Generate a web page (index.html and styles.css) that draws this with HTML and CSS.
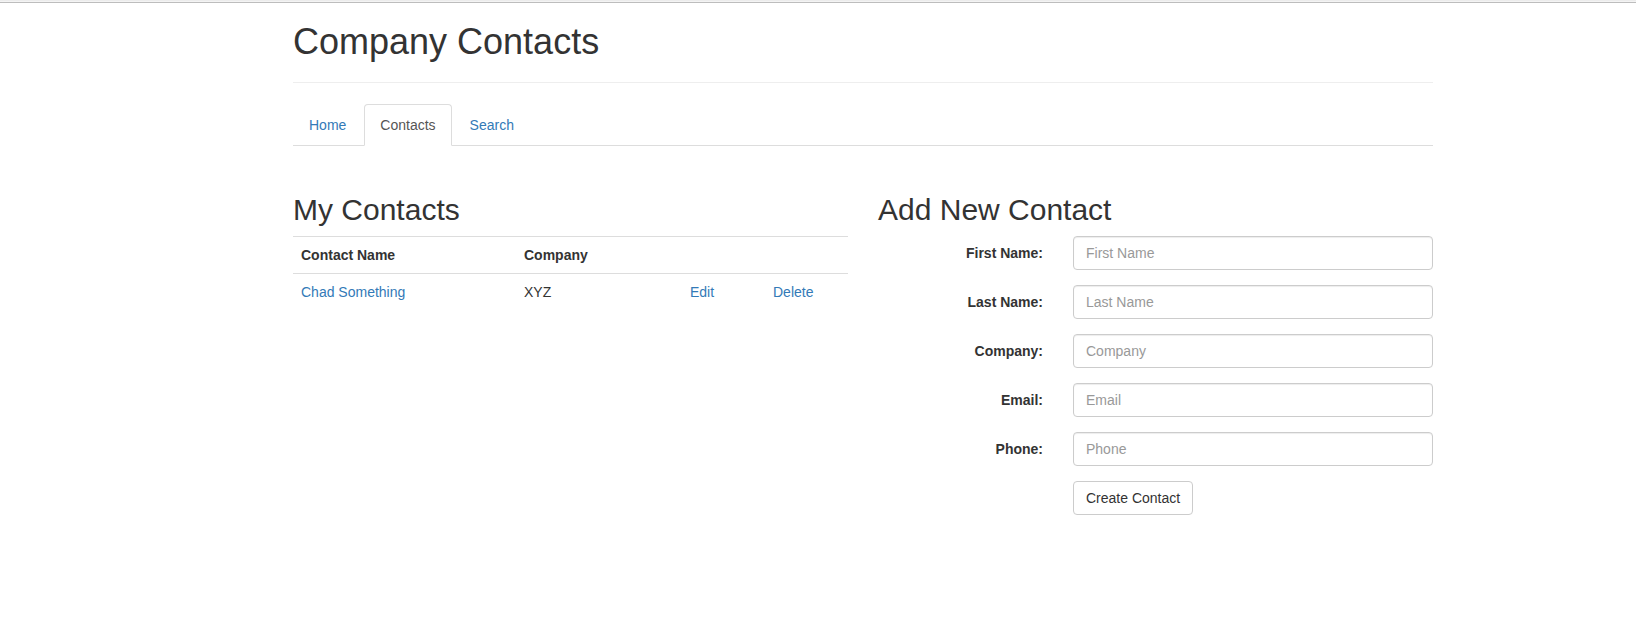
FILE: index.html
```html
<!DOCTYPE html>
<html lang="en">
<head>
<meta charset="utf-8">
<title>Company Contacts</title>
<link rel="stylesheet" href="styles.css">
</head>
<body>
<div class="topline"></div>
<div class="container">
  <header class="page-header">
    <h1>Company Contacts</h1>
  </header>
  <ul class="nav-tabs">
    <li><a href="#">Home</a></li>
    <li class="active"><a href="#">Contacts</a></li>
    <li><a href="#">Search</a></li>
  </ul>
  <div class="columns">
    <section class="col">
      <h2>My Contacts</h2>
      <table class="table">
        <thead>
          <tr>
            <th class="c-name">Contact Name</th>
            <th class="c-company">Company</th>
            <th class="c-edit"></th>
            <th class="c-delete"></th>
          </tr>
        </thead>
        <tbody>
          <tr>
            <td><a href="#">Chad Something</a></td>
            <td>XYZ</td>
            <td><a href="#">Edit</a></td>
            <td><a href="#">Delete</a></td>
          </tr>
        </tbody>
      </table>
    </section>
    <section class="col">
      <h2>Add New Contact</h2>
      <form class="form">
        <div class="form-group">
          <label for="fn">First Name:</label>
          <input id="fn" class="form-control" type="text" placeholder="First Name">
        </div>
        <div class="form-group">
          <label for="ln">Last Name:</label>
          <input id="ln" class="form-control" type="text" placeholder="Last Name">
        </div>
        <div class="form-group">
          <label for="co">Company:</label>
          <input id="co" class="form-control" type="text" placeholder="Company">
        </div>
        <div class="form-group">
          <label for="em">Email:</label>
          <input id="em" class="form-control" type="text" placeholder="Email">
        </div>
        <div class="form-group">
          <label for="ph">Phone:</label>
          <input id="ph" class="form-control" type="text" placeholder="Phone">
        </div>
        <div class="form-group">
          <span></span>
          <div><button type="button" class="btn">Create Contact</button></div>
        </div>
      </form>
    </section>
  </div>
</div>
</body>
</html>
```

FILE: styles.css
```css
* { box-sizing: border-box; }

html, body {
  margin: 0;
  padding: 0;
  background: #fff;
}

body {
  font-family: "Liberation Sans", Arial, Helvetica, sans-serif;
  font-size: 14px;
  line-height: 20px;
  color: #333;
}

.topline {
  height: 3px;
  border-top: 1px solid #ececec;
  border-bottom: 1px solid #bdbdbd;
  background: #f4f4f4;
}

.container {
  width: 1140px;
  margin-left: 293px;
}

a {
  color: #337ab7;
  text-decoration: none;
}

.page-header {
  padding-top: 19px;
  padding-bottom: 11px;
  border-bottom: 1px solid #eee;
  margin-bottom: 21px;
}

.page-header h1 {
  margin: 0 0 9px;
  font-size: 36px;
  line-height: 40px;
  font-weight: 500;
}

.nav-tabs {
  list-style: none;
  margin: 0;
  padding: 0;
  display: flex;
  border-bottom: 1px solid #ddd;
}

.nav-tabs li {
  margin-right: 2px;
  margin-bottom: -1px;
}

.nav-tabs a {
  display: block;
  padding: 10px 15px;
  line-height: 20px;
  border: 1px solid transparent;
  border-radius: 4px 4px 0 0;
}

.nav-tabs .active a {
  color: #555;
  background: #fff;
  border-color: #ddd #ddd transparent;
}

.columns {
  display: grid;
  grid-template-columns: 555px 555px;
  column-gap: 30px;
  padding-top: 47px;
}

h2 {
  margin: 0 0 10px;
  font-size: 30px;
  line-height: 33px;
  font-weight: 500;
}

.table {
  width: 100%;
  border-collapse: collapse;
  border-spacing: 0;
}

.table th,
.table td {
  padding: 8px;
  text-align: left;
  vertical-align: top;
  line-height: 20px;
}

.table th {
  font-weight: bold;
  border-top: 1px solid #ddd;
  border-bottom: 1px solid #ddd;
}

.c-name { width: 223px; }
.c-company { width: 166px; }
.c-edit { width: 83px; }
.c-delete { width: 83px; }

.form-group {
  display: grid;
  grid-template-columns: 165px 360px;
  column-gap: 30px;
  margin-bottom: 15px;
}

.form-group label {
  text-align: right;
  font-weight: bold;
  padding-top: 7px;
  line-height: 20px;
}

.form-control {
  display: block;
  width: 100%;
  height: 34px;
  padding: 6px 12px;
  font-family: inherit;
  font-size: 14px;
  line-height: 20px;
  color: #555;
  background: #fff;
  border: 1px solid #ccc;
  border-radius: 4px;
  box-shadow: inset 0 1px 1px rgba(0, 0, 0, 0.075);
  outline: none;
}

.form-control::placeholder {
  color: #999;
  opacity: 1;
}

.btn {
  display: inline-block;
  height: 34px;
  padding: 6px 12px;
  font-family: inherit;
  font-size: 14px;
  line-height: 20px;
  color: #333;
  background: #fff;
  border: 1px solid #ccc;
  border-radius: 4px;
  cursor: pointer;
}
```
